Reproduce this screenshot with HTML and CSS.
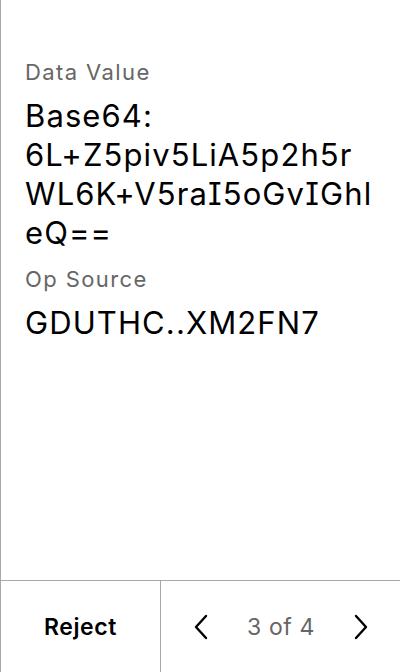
FILE: index.html
```html
<!DOCTYPE html>
<html>
<head>
<meta charset="utf-8">
<link rel="stylesheet" href="styles.css">
</head>
<body>
<div class="screen">
  <div class="content">
    <div class="field">
      <div class="label">Data Value</div>
      <div class="value">Base64:<br>6L+Z5piv5LiA5p2h5r<br>WL6K+V5raI5oGvIGhl<br>eQ==</div>
    </div>
    <div class="field">
      <div class="label">Op Source</div>
      <div class="value">GDUTHC..XM2FN7</div>
    </div>
  </div>
  <div class="footer">
    <div class="reject">Reject</div>
    <div class="pager">
      <svg class="chev" width="16" height="26" viewBox="0 0 16 26"><path d="M13 2 L3 13 L13 24" fill="none" stroke="#000" stroke-width="2.4" stroke-linecap="round" stroke-linejoin="round"/></svg>
      <span class="count">3 of 4</span>
      <svg class="chev" width="16" height="26" viewBox="0 0 16 26"><path d="M3 2 L13 13 L3 24" fill="none" stroke="#000" stroke-width="2.4" stroke-linecap="round" stroke-linejoin="round"/></svg>
    </div>
  </div>
</div>
</body>
</html>
```
FILE: styles.css
```css
html, body { margin: 0; padding: 0; background: #fff; }
body { font-family: Inter, "Noto Sans", sans-serif; color: #000; font-feature-settings: "cv08" 1; font-optical-sizing: none; }
.screen {
  width: 400px; height: 672px; box-sizing: border-box;
  border-left: 1px solid #a8a8a8;
  display: flex; flex-direction: column;
}
.content { flex: 1; padding: 58px 20px 0 24px; }
.field { margin-bottom: 13px; }
.label { font-size: 22px; line-height: 28px; color: #666; margin-bottom: 10px; letter-spacing: 1.4px; }
.value { font-size: 31px; line-height: 39px; color: #000; white-space: nowrap; letter-spacing: 1.1px; }
.footer {
  height: 92px; box-sizing: border-box; border-top: 1px solid #a8a8a8;
  display: flex;
}
.reject {
  width: 159px; border-right: 1px solid #a8a8a8;
  display: flex; align-items: center; justify-content: center;
  font-size: 23px; font-weight: 600; letter-spacing: 0.6px;
}
.pager { flex: 1; display: flex; align-items: center; justify-content: space-between; padding: 0 31px 0 32px; }
.count { font-size: 23px; color: #666; letter-spacing: 0.6px; }
.chev { display: block; }
```
